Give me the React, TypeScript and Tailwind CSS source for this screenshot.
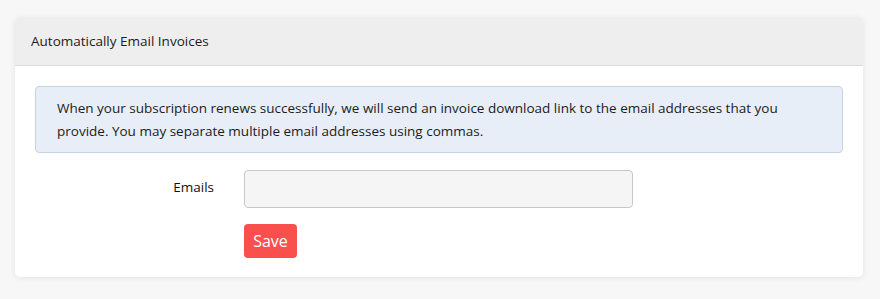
import React from 'react';

const App: React.FC = () => {
    return (
        <div className="min-h-[299px] bg-[#f7f7f7] pt-[17px] pl-[15px]" style={{ fontFamily: '"Open Sans", "Noto Sans", sans-serif' }}>
            <div className="w-[848px] bg-white rounded-[5px] shadow-[0_1px_6px_rgba(0,0,0,0.08)] overflow-hidden">
                {/* Header */}
                <div className="h-[49px] bg-[#eeeeee] border-b border-[#dcdcdc] px-4 flex items-center">
                    <h3 className="text-[13.5px] text-[#1c1c1c]">Automatically Email Invoices</h3>
                </div>

                {/* Body */}
                <div className="px-5 pt-5 pb-[19px]">
                    <div className="bg-[#e7eef7] border border-[#c5d3e0] rounded-[4px] px-[21px] pt-[10px] pb-[9px] text-[13.5px] leading-[23px] text-[#1c1c1c]">
                        When your subscription renews successfully, we will send an invoice download link to the email addresses that you
                        <br />
                        provide. You may separate multiple email addresses using commas.
                    </div>

                    <div className="mt-[17px] flex">
                        <label className="w-[179px] text-right text-[13.5px] text-[#111] pt-[7px]">Emails</label>
                        <div className="ml-[30px] flex flex-col items-start">
                            <input type="text" className="w-[389px] h-[38px] bg-[#f5f5f5] border border-[#c8c8c8] rounded-[4px] px-3 text-[14px] outline-none" />
                            <button className="mt-4 h-[34px] w-[53px] bg-[#f9504e] text-white text-[16px] font-medium rounded-[4px]">Save</button>
                        </div>
                    </div>
                </div>
            </div>
        </div>
    );
};

export default App;
